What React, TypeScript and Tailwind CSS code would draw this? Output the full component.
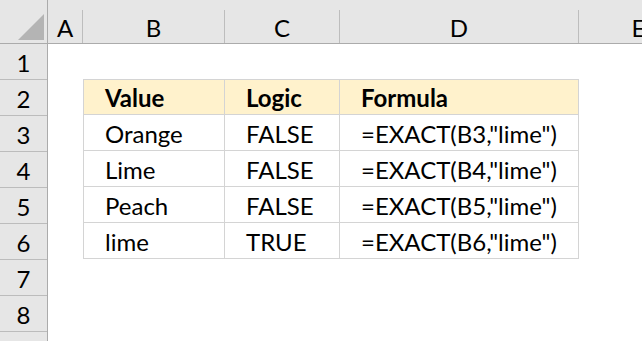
const columns = [
  { name: "A", width: "w-[35px]" },
  { name: "B", width: "w-[142px]" },
  { name: "C", width: "w-[115px]" },
  { name: "D", width: "w-[239px]" },
  { name: "E", width: "w-[120px]" },
];

const rows = [
  ["Orange", "FALSE", '=EXACT(B3,"lime")'],
  ["Lime", "FALSE", '=EXACT(B4,"lime")'],
  ["Peach", "FALSE", '=EXACT(B5,"lime")'],
  ["lime", "TRUE", '=EXACT(B6,"lime")'],
];

const widths = ["w-[142px]", "w-[115px]", "w-[239px]"];

function TableRow({ cells, head = false }: { cells: string[]; head?: boolean }) {
  return (
    <div className={`flex w-fit h-[36px] ${head ? "bg-[#fff2cc] font-bold" : ""}`}>
      {cells.map((text, i) => (
        <div
          key={i}
          className={`${widths[i]} flex items-center pl-[21px] pt-[2px] whitespace-nowrap border-r border-b border-[#d4d4d4] ${i === 0 ? "border-l" : ""} ${head ? "border-t" : ""}`}
        >
          {text}
        </div>
      ))}
    </div>
  );
}

export default function App() {
  return (
    <div className="w-[642px] h-[341px] overflow-hidden bg-white text-black text-[24px] leading-none font-['Lato',sans-serif]">
      {/* column headers */}
      <div className="flex h-[44px] bg-[#e6e6e6] border-b border-[#ababab]">
        <div className="w-[48px] shrink-0 flex items-end border-r border-[#ababab] relative">
          <svg className="absolute left-[18px] top-[14px]" width="26" height="26" viewBox="0 0 26 26">
            <polygon points="26,0 26,26 0,26" fill="#b4b4b4" />
          </svg>
        </div>
        {columns.map((c) => (
          <div key={c.name} className={`${c.width} shrink-0 flex items-end`}>
            <div className="w-full h-[33px] flex items-center justify-center pt-[3px] border-r border-[#bdbdbd]">
              {c.name}
            </div>
          </div>
        ))}
      </div>

      <div className="flex">
        {/* row numbers */}
        <div className="w-[48px] shrink-0 bg-[#e6e6e6] border-r border-[#ababab]">
          {[1, 2, 3, 4, 5, 6, 7, 8, 9].map((n) => (
            <div key={n} className="h-[36px] flex items-center justify-center pt-[2px] border-b border-[#bcbcbc]">
              {n <= 8 ? n : ""}
            </div>
          ))}
        </div>

        {/* sheet area */}
        <div className="flex-1 pt-[35px] pl-[35px]">
          <TableRow head cells={["Value", "Logic", "Formula"]} />
          {rows.map((r, i) => (
            <TableRow key={i} cells={r} />
          ))}
        </div>
      </div>
    </div>
  );
}
